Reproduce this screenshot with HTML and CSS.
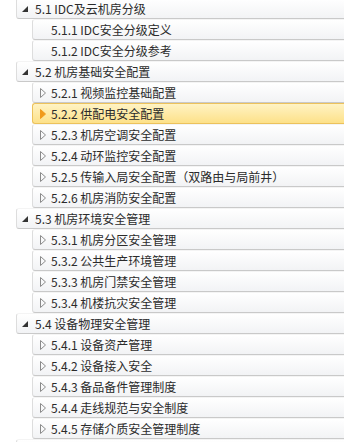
FILE: index.html
```html
<!DOCTYPE html>
<html lang="zh-CN">
  <head>
    <meta charset="UTF-8" />
    <title>目录</title>
    <link rel="stylesheet" href="styles.css">
  </head>
  <body>
    <ul class="tree">
      <li class="node level-1"><svg class="tri" viewBox="0 0 6 6"><polygon points="6,0 6,6 0,6" /></svg><span>5.1 IDC及云机房分级</span></li>
      <li class="node level-2 leaf"><span>5.1.1 IDC安全分级定义</span></li>
      <li class="node level-2 leaf"><span>5.1.2 IDC安全分级参考</span></li>

      <li class="node level-1"><svg class="tri" viewBox="0 0 6 6"><polygon points="6,0 6,6 0,6" /></svg><span>5.2 机房基础安全配置</span></li>
      <li class="node level-2"><svg class="arrow" viewBox="0 0 6 10"><polygon points="0.5,0.5 5.5,5 0.5,9.5" /></svg><span>5.2.1 视频监控基础配置</span></li>
      <li class="node level-2 selected"><svg class="arrow" viewBox="0 0 6 10"><polygon points="0.5,0.5 5.5,5 0.5,9.5" /></svg><span>5.2.2 供配电安全配置</span></li>
      <li class="node level-2"><svg class="arrow" viewBox="0 0 6 10"><polygon points="0.5,0.5 5.5,5 0.5,9.5" /></svg><span>5.2.3 机房空调安全配置</span></li>
      <li class="node level-2"><svg class="arrow" viewBox="0 0 6 10"><polygon points="0.5,0.5 5.5,5 0.5,9.5" /></svg><span>5.2.4 动环监控安全配置</span></li>
      <li class="node level-2"><svg class="arrow" viewBox="0 0 6 10"><polygon points="0.5,0.5 5.5,5 0.5,9.5" /></svg><span>5.2.5 传输入局安全配置（双路由与局前井）</span></li>
      <li class="node level-2"><svg class="arrow" viewBox="0 0 6 10"><polygon points="0.5,0.5 5.5,5 0.5,9.5" /></svg><span>5.2.6 机房消防安全配置</span></li>

      <li class="node level-1"><svg class="tri" viewBox="0 0 6 6"><polygon points="6,0 6,6 0,6" /></svg><span>5.3 机房环境安全管理</span></li>
      <li class="node level-2"><svg class="arrow" viewBox="0 0 6 10"><polygon points="0.5,0.5 5.5,5 0.5,9.5" /></svg><span>5.3.1 机房分区安全管理</span></li>
      <li class="node level-2"><svg class="arrow" viewBox="0 0 6 10"><polygon points="0.5,0.5 5.5,5 0.5,9.5" /></svg><span>5.3.2 公共生产环境管理</span></li>
      <li class="node level-2"><svg class="arrow" viewBox="0 0 6 10"><polygon points="0.5,0.5 5.5,5 0.5,9.5" /></svg><span>5.3.3 机房门禁安全管理</span></li>
      <li class="node level-2"><svg class="arrow" viewBox="0 0 6 10"><polygon points="0.5,0.5 5.5,5 0.5,9.5" /></svg><span>5.3.4 机楼抗灾安全管理</span></li>

      <li class="node level-1"><svg class="tri" viewBox="0 0 6 6"><polygon points="6,0 6,6 0,6" /></svg><span>5.4 设备物理安全管理</span></li>
      <li class="node level-2"><svg class="arrow" viewBox="0 0 6 10"><polygon points="0.5,0.5 5.5,5 0.5,9.5" /></svg><span>5.4.1 设备资产管理</span></li>
      <li class="node level-2"><svg class="arrow" viewBox="0 0 6 10"><polygon points="0.5,0.5 5.5,5 0.5,9.5" /></svg><span>5.4.2 设备接入安全</span></li>
      <li class="node level-2"><svg class="arrow" viewBox="0 0 6 10"><polygon points="0.5,0.5 5.5,5 0.5,9.5" /></svg><span>5.4.3 备品备件管理制度</span></li>
      <li class="node level-2"><svg class="arrow" viewBox="0 0 6 10"><polygon points="0.5,0.5 5.5,5 0.5,9.5" /></svg><span>5.4.4 走线规范与安全制度</span></li>
      <li class="node level-2"><svg class="arrow" viewBox="0 0 6 10"><polygon points="0.5,0.5 5.5,5 0.5,9.5" /></svg><span>5.4.5 存储介质安全管理制度</span></li>

      <!-- next section, only its top edge is in view -->
      <li class="node level-1"></li>
    </ul>
  </body>
</html>
```

FILE: styles.css
```css
:root {
  --text: #2b2b2b;
  --row-top: #ffffff;
  --row-bottom: #f2f3f5;
  --row-border: #c9c9c9;
  --row-edge: #dddddd;
  --sel-top: #fff3c4;
  --sel-bottom: #fde189;
  --sel-border: #ecc25c;
}

* {
  margin: 0;
  padding: 0;
  box-sizing: border-box;
}

body {
  background: #ffffff;
  font-family: "Noto Sans CJK SC", "Noto Sans", sans-serif;
  font-size: 12px;
  color: var(--text);
  overflow: hidden;
}

.tree {
  list-style: none;
  margin-top: -2px;
}

.node {
  display: flex;
  align-items: center;
  height: 21px;
  border: 1px solid var(--row-edge);
  border-top-color: #f4f4f4;
  border-bottom-color: var(--row-border);
  border-right: none;
  border-radius: 3px 0 0 3px;
  background: linear-gradient(var(--row-top), var(--row-bottom));
  white-space: nowrap;
  line-height: 1;
}

.node span {
  padding-top: 1px;
}

.level-1 {
  margin-left: 16px;
  padding-left: 5px;
}

.level-2 {
  margin-left: 32px;
  padding-left: 7px;
}

.leaf {
  padding-left: 18px;
}

.tri {
  width: 6px;
  height: 6px;
  margin-right: 7px;
  margin-top: 1px;
  fill: #333333;
}

.arrow {
  width: 6px;
  height: 10px;
  margin-right: 5px;
  fill: none;
  stroke: #8a8a8a;
  stroke-width: 1;
}

.selected {
  background: linear-gradient(var(--sel-top), var(--sel-bottom));
  border-color: var(--sel-border);
}

.selected .arrow {
  fill: #f19a1b;
  stroke: #f19a1b;
}
```
